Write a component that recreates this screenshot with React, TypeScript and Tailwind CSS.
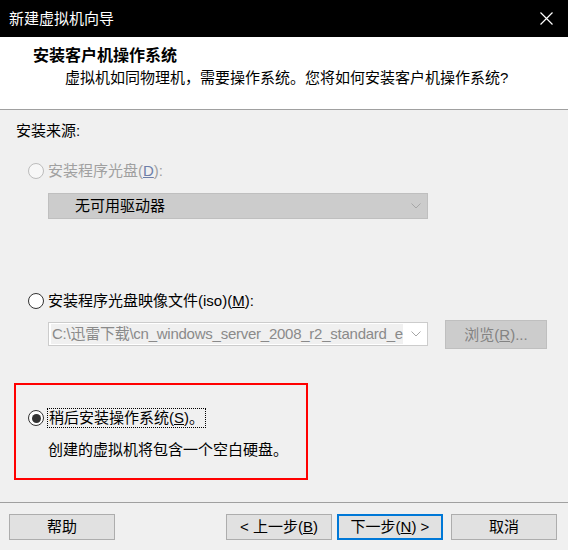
import React from "react";

const font = { fontFamily: '"Liberation Sans", "Noto Sans CJK SC", sans-serif' };

const Radio = ({ state }: { state: "disabled" | "off" | "on" }) => {
  if (state === "disabled") {
    return <span className="w-[16px] h-[16px] rounded-full border border-[#bcbcbc] bg-[#f7f7f7] shrink-0" />;
  }
  return (
    <span
      className={
        "w-[16px] h-[16px] rounded-full bg-white shrink-0 flex items-center justify-center " +
        (state === "on" ? "border-[1.5px] border-[#333333]" : "border border-[#333333]")
      }
    >
      {state === "on" && <span className="w-[9px] h-[9px] rounded-full bg-[#333333]" />}
    </span>
  );
};

const Chevron = () => (
  <svg width="10" height="6" viewBox="0 0 10 6" className="shrink-0">
    <path d="M0.5 0.5 L5 5 L9.5 0.5" fill="none" stroke="#a6a6a6" strokeWidth="1" />
  </svg>
);

const Button = ({ children, primary }: { children: React.ReactNode; primary?: boolean }) => (
  <div
    className={
      "w-[106px] h-[26px] flex items-center justify-center bg-[#e1e1e1] text-[15px] leading-[20px] text-black " +
      (primary ? "border-2 border-[#0078d7]" : "border border-[#adadad]")
    }
  >
    {children}
  </div>
);

export default function App() {
  return (
    <div className="w-[568px] h-[550px] bg-[#f0f0f0] overflow-hidden text-black" style={font}>
      {/* title bar */}
      <div className="h-[37px] bg-black flex items-center justify-between pl-[9px] pr-[15px]">
        <span className="text-white text-[15px] leading-[20px]">新建虚拟机向导</span>
        <svg width="13" height="13" viewBox="0 0 13 13">
          <path d="M0.5 0.5 L12.5 12.5 M12.5 0.5 L0.5 12.5" stroke="#ffffff" strokeWidth="1.2" />
        </svg>
      </div>

      {/* header */}
      <div className="h-[73px] bg-white border-b border-[#a0a0a0] pt-[9px]">
        <div className="pl-[33px] text-[16px] leading-[20px] font-bold">安装客户机操作系统</div>
        <div className="pl-[65px] mt-[2px] text-[15px] leading-[20px]">
          虚拟机如同物理机，需要操作系统。您将如何安装客户机操作系统?
        </div>
      </div>

      {/* body */}
      <div className="text-[15px] leading-[20px]">
        <div className="pl-[16px] mt-[11px]">安装来源:</div>

        <div className="flex items-center gap-[4px] pl-[28px] mt-[20px] text-[#a0a0a0]">
          <Radio state="disabled" />
          <span>
            安装程序光盘(<span className="underline text-[#6d7fa8]">D</span>):
          </span>
        </div>

        <div className="ml-[48px] mt-[12px] w-[380px] h-[26px] bg-[#cccccc] border border-[#bfbfbf] flex items-center justify-between pl-[26px] pr-[6px]">
          <span>无可用驱动器</span>
          <Chevron />
        </div>

        <div className="flex items-center gap-[4px] pl-[28px] mt-[72px]">
          <Radio state="off" />
          <span>
            安装程序光盘映像文件(iso)(<span className="underline">M</span>):
          </span>
        </div>

        <div className="flex items-start mt-[9px] pl-[48px]">
          <div className="mt-[2px] w-[380px] h-[24px] bg-white border border-[#cccccc] flex items-center pl-[2px] pr-[6px]">
            <div className="whitespace-nowrap bg-[#f0f0f0] text-[#8a8a8a] pl-[1px] tracking-[-0.25px]">
              C:\迅雷下载\cn_windows_server_2008_r2_standard_e
            </div>
            <span className="ml-auto">
              <Chevron />
            </span>
          </div>
          <div className="ml-[17px] w-[102px] h-[29px] bg-[#cccccc] border border-[#bfbfbf] flex items-center justify-center text-[#838383]">
            浏览(<span className="underline">R</span>)...
          </div>
        </div>

        {/* highlighted option */}
        <div className="ml-[14px] mt-[34px] w-[294px] h-[97px] border-2 border-[#ff0000] pt-[23px]">
          <div className="flex items-center gap-[3px] pl-[12px]">
            <Radio state="on" />
            <span className="border border-dotted border-black px-[1px] leading-[18px]">
              稍后安装操作系统(<span className="underline">S</span>)。
            </span>
          </div>
          <div className="pl-[32px] mt-[12px]">创建的虚拟机将包含一个空白硬盘。</div>
        </div>
      </div>

      {/* footer */}
      <div className="mt-[22px] border-t border-[#a0a0a0] pt-[11px] flex items-center pl-[9px] pr-[11px]">
        <Button>帮助</Button>
        <div className="ml-auto flex items-center gap-[5px]">
          <Button>
            &lt; 上一步(<span className="underline">B</span>)
          </Button>
          <Button primary>
            下一步(<span className="underline">N</span>) &gt;
          </Button>
          <div className="ml-[3px]">
            <Button>取消</Button>
          </div>
        </div>
      </div>
    </div>
  );
}
